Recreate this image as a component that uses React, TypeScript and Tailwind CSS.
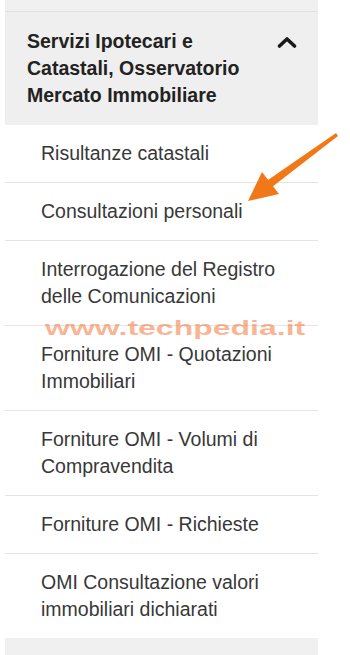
const items = [
  "Risultanze catastali",
  "Consultazioni personali",
  "Interrogazione del Registro delle Comunicazioni",
  "Forniture OMI - Quotazioni Immobiliari",
  "Forniture OMI - Volumi di Compravendita",
  "Forniture OMI - Richieste",
  "OMI Consultazione valori immobiliari dichiarati",
];

const ChevronUp = () => (
  <svg width="20" height="12" viewBox="0 0 20 12" className="mt-[8px] shrink-0">
    <polyline
      points="2.5,10 10,3 17.5,10"
      fill="none"
      stroke="#1a1a1a"
      strokeWidth="3.6"
      strokeLinecap="round"
      strokeLinejoin="round"
    />
  </svg>
);

const Arrow = () => (
  <svg
    width="350"
    height="655"
    viewBox="0 0 350 655"
    className="pointer-events-none absolute left-0 top-0"
  >
    <polygon points="336,133 338,136 272,187 268,180" fill="#f07818" />
    <polygon points="248,201 262,172 279,194" fill="#f07818" />
  </svg>
);

export default function App() {
  return (
    <div className="relative h-[655px] w-[350px] overflow-hidden bg-white font-['Liberation_Sans',Arial,sans-serif]">
      <div className="ml-[5px] w-[313px]">
        <div className="h-[12px] border-b border-[#e0e0e0] bg-[#f0f0f0]" />
        <div className="flex items-start justify-between bg-[#efefef] pb-[16px] pl-[22px] pr-[21px] pt-[16px]">
          <span className="w-[228px] text-[19.5px] font-bold leading-[27px] text-[#222]">
            Servizi Ipotecari e Catastali, Osservatorio Mercato Immobiliare
          </span>
          <ChevronUp />
        </div>
        <ul>
          {items.map((item, i) => (
            <li
              key={item}
              className={`py-[15px] pl-[36px] pr-[22px] text-[19.5px] leading-[27px] text-[#383838] ${
                i < items.length - 1 ? "border-b border-[#e4e4e4]" : ""
              }`}
            >
              {item}
            </li>
          ))}
        </ul>
        <div className="h-[40px] bg-[#f0f0f0]" />
      </div>

      <div className="pointer-events-none absolute left-[45px] top-[316px] origin-left scale-x-[1.6] text-[20px] font-bold leading-[24px] text-[#f26b2a]/50">
        www.techpedia.it
      </div>
      <Arrow />
    </div>
  );
}
